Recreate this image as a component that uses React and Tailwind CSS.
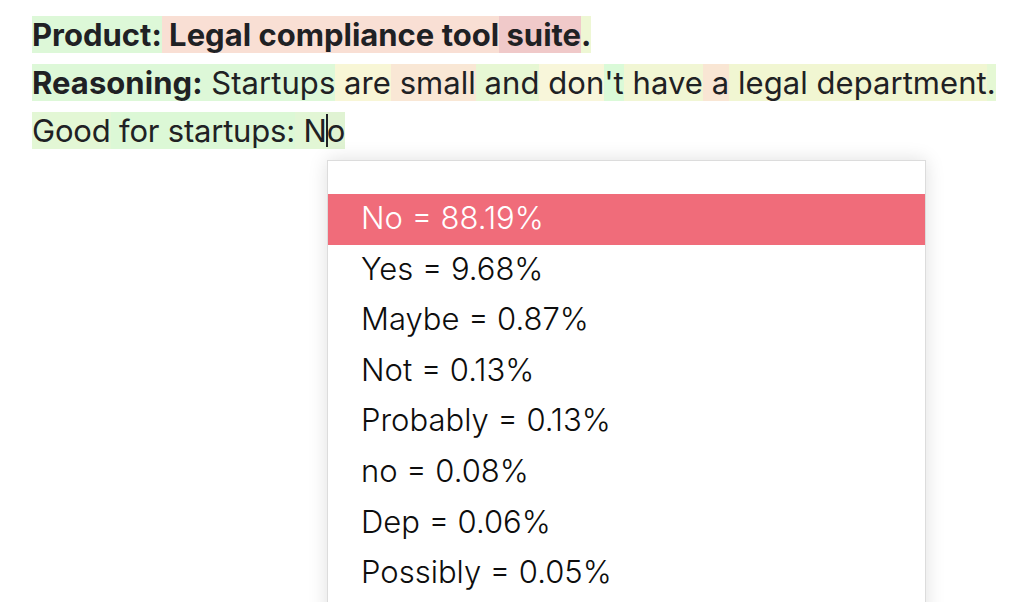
const line1 = [
  ['Product:', '#ddf8d8'],
  [' Legal compliance tool', '#f9dfd4'],
  [' suite', '#f0c9c9'],
  ['.', '#eef7d4'],
];
const line2 = [
  ['Reasoning:', '#ddf8d8', true],
  [' Startups', '#ddf8d8'],
  [' are', '#f8f6d6'],
  [' small', '#f9e7d5'],
  [' and', '#e7f7d4'],
  [' don', '#f8f6da'],
  ["'t", '#dafad8'],
  [' have', '#f1f6d4'],
  [' a', '#f9e6d4'],
  [' legal department', '#f1f6d2'],
  ['.', '#e5f8d4'],
];
const options = [
  'No = 88.19%',
  'Yes = 9.68%',
  'Maybe = 0.87%',
  'Not = 0.13%',
  'Probably = 0.13%',
  'no = 0.08%',
  'Dep = 0.06%',
  'Possibly = 0.05%',
];

export default function App() {
  return (
    <div className="relative w-[1030px] h-[602px] overflow-hidden bg-white">
      <div
        className="pl-[32px] pt-[11px] text-[31px] leading-[48px] text-[#1f2124] whitespace-pre"
        style={{ fontFamily: 'Inter, sans-serif' }}
      >
        <div className="font-bold">
          {line1.map(([t, c], i) => (
            <span key={i} style={{ backgroundColor: c }}>{t}</span>
          ))}
        </div>
        <div className="tracking-[0.05px]">
          {line2.map(([t, c, b], i) => (
            <span key={i} className={b ? 'font-bold' : ''} style={{ backgroundColor: c }}>{t}</span>
          ))}
        </div>
        <div className="tracking-[-0.2px]">
          <span className="bg-[#e3f7d5]">Good</span>
          <span className="bg-[#dcf8d6]"> for startups:</span>
          <span className="relative bg-[#e2f6d5]">
            {' N'}
            <span className="absolute right-[-1px] top-[2px] w-[2px] h-[33px] bg-[#1f2124]" />
          </span>
          <span className="bg-[#e0f3d3]">o</span>
        </div>
      </div>

      <div className="absolute left-[327px] top-[160px] w-[599px] h-[460px] bg-white border border-[#dcdcdc] shadow-[0_0_18px_rgba(0,0,0,0.13)] pt-[33px]">
        {options.map((o, i) => (
          <div
            key={o}
            className={
              'h-[50.6px] leading-[48.6px] pl-[33px] text-[31px] font-light whitespace-nowrap ' +
              (i === 0 ? 'bg-[#f06c7a] text-white' : 'text-[#0d0d0d]')
            }
            style={{ fontFamily: 'Inter, sans-serif' }}
          >
            {o}
          </div>
        ))}
      </div>
    </div>
  );
}
